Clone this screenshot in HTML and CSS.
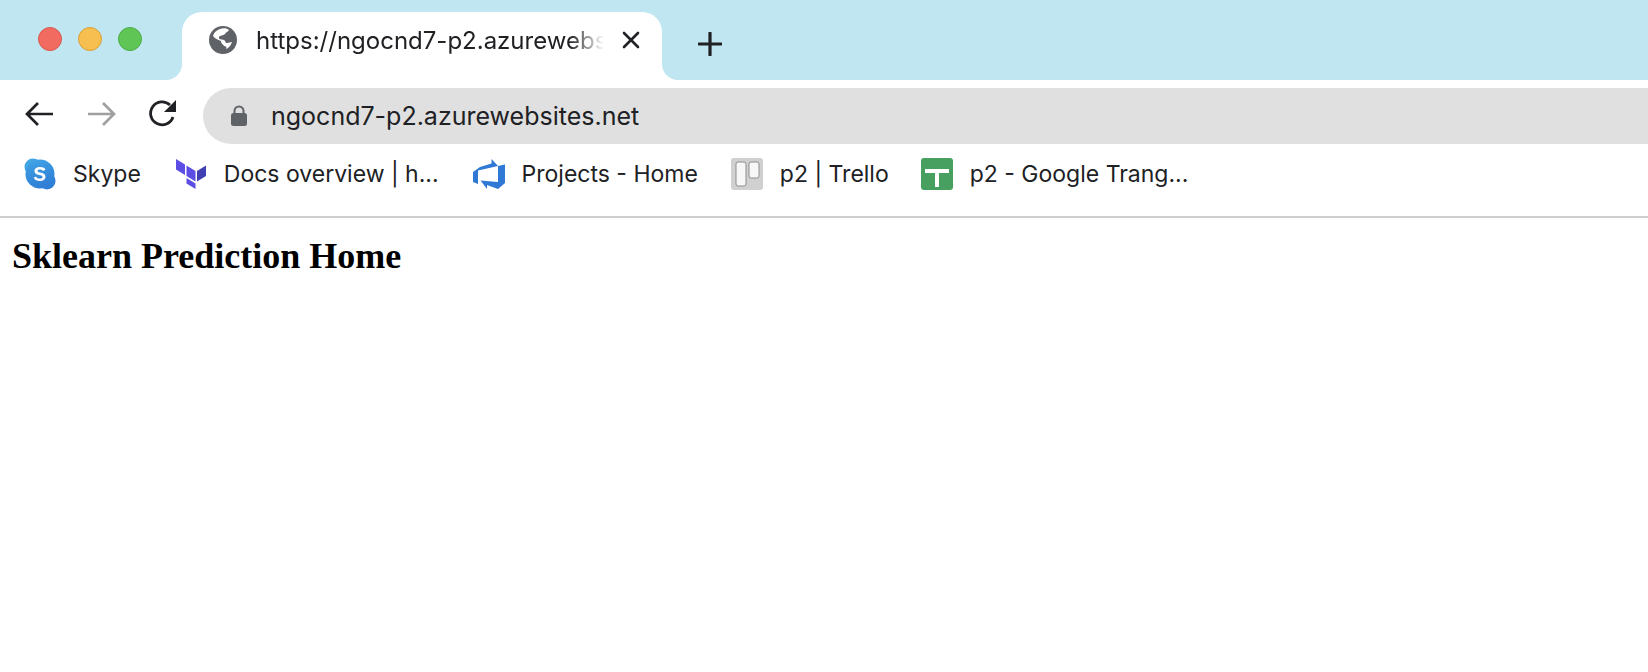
FILE: index.html
```html
<!DOCTYPE html>
<html lang="en">
<head>
<meta charset="utf-8">
<title>Sklearn Prediction Home</title>
<link rel="stylesheet" href="styles.css">
</head>
<body>
<header class="chrome">
  <div class="tabstrip">
    <div class="traffic">
      <span class="dot dot-red"></span>
      <span class="dot dot-yellow"></span>
      <span class="dot dot-green"></span>
    </div>
    <div class="tab">
      <span class="corner corner-left"></span>
      <svg class="globe" width="30" height="30" viewBox="0 0 30 30"><circle cx="15" cy="15" r="14" fill="#5f6368"/><path d="M12 4c3-1 7-1 9 1-1 2-3 2-4 4-2 2-5 1-6 3-1 3 3 2 5 3 2 1 1 3 3 3l5-1c-1 3-3 6-6 7 1-2 0-3-2-3-1-2-3-2-3-5-2-1-6-2-8-5 1-4 4-6 7-7z" fill="#fff"/></svg>
      <span class="tab-title">https://ngocnd7-p2.azurewebsites.net</span>
      <svg class="close" width="18" height="18" viewBox="0 0 18 18"><path d="M2 2l14 14M16 2L2 16" stroke="#202124" stroke-width="2.6" stroke-linecap="round"/></svg>
      <span class="corner corner-right"></span>
    </div>
    <svg class="newtab" width="24" height="24" viewBox="0 0 24 24"><path d="M12 1v22M1 12h22" stroke="#202124" stroke-width="3.2" stroke-linecap="round"/></svg>
  </div>
  <div class="toolbar">
    <svg class="nav nav-back" width="30" height="26" viewBox="0 0 30 26"><path d="M28 13H3M13 2L2 13l11 11" fill="none" stroke="#202124" stroke-width="2.7"/></svg>
    <svg class="nav nav-forward" width="30" height="26" viewBox="0 0 30 26"><path d="M2 13h25M17 2l11 11-11 11" fill="none" stroke="#a0a0a0" stroke-width="2.7"/></svg>
    <svg class="nav nav-reload" width="30" height="30" viewBox="0 0 30 30"><path d="M25 19A11.500 11.500 0 1 1 22 7" fill="none" stroke="#202124" stroke-width="2.8"/><path d="M28 2v12H16z" fill="#202124"/></svg>
    <div class="omnibox">
      <svg class="lock" width="18" height="22" viewBox="0 0 18 22"><path d="M4.500 9V6a4.500 4.500 0 0 1 9 0v3" fill="none" stroke="#5f6368" stroke-width="2"/><rect x="1" y="8" width="16" height="13" rx="2.500" fill="#5f6368"/></svg>
      <span class="url">ngocnd7-p2.azurewebsites.net</span>
    </div>
  </div>
  <nav class="bookmarks">
    <a class="bookmark bm-skype">
      <svg width="32" height="32" viewBox="0 0 32 32"><defs><linearGradient id="sk" x1="0" y1="0" x2="0.3" y2="1"><stop offset="0" stop-color="#42a5e6"/><stop offset="1" stop-color="#2f7fd6"/></linearGradient></defs><circle cx="9" cy="9" r="8.500" fill="#42a5e6"/><circle cx="23" cy="23" r="8.500" fill="#2f7fd6"/><circle cx="16" cy="16" r="14.500" fill="url(#sk)"/><path d="M21.500 11.500c-1-1.600-3-2.400-5.500-2.400-3.200 0-5.500 1.600-5.500 3.900 0 5 8 3.300 8 5.900 0 1-1 1.700-2.700 1.700-1.800 0-3-.7-3.800-2.200l-2.300 1.400c1.100 2.200 3.200 3.200 6.100 3.200 3.400 0 5.700-1.700 5.700-4.300 0-5.100-8-3.500-8-5.800 0-.9.900-1.500 2.400-1.500 1.500 0 2.500.5 3.200 1.600z" fill="#fff"/></svg>
      <span class="bm-label">Skype</span>
    </a>
    <a class="bookmark bm-tf">
      <svg width="32" height="32" viewBox="0 0 32 32"><path d="M1 1l9 5.500v10.500l-9-5.500z" fill="#5c4ee5"/><path d="M11.500 7.500l9 5.500v10.500l-9-5.500z" fill="#5c4ee5"/><path d="M22 13l9-5.500V18l-9 5.500z" fill="#4040b2"/><path d="M11.500 20l9 5.500V31l-9-5.500z" fill="#5c4ee5"/></svg>
      <span class="bm-label">Docs overview | h...</span>
    </a>
    <a class="bookmark bm-ado">
      <svg width="32" height="32" viewBox="0 0 32 32"><path d="M32 6.500V25l-7 6-11-4 0 4-6.500-8.500L25 24V8zM25 8L18.500 1v4.500L7 9 0 14v10l5 2V12.500z" fill="#2f78d6"/></svg>
      <span class="bm-label">Projects - Home</span>
    </a>
    <a class="bookmark bm-trello">
      <svg width="32" height="32" viewBox="0 0 32 32"><rect width="32" height="32" rx="3" fill="#d0d0d0"/><rect x="5" y="4" width="10" height="24" rx="2" fill="#f7f7f7" stroke="#8e8e8e"/><rect x="18" y="4" width="10" height="16" rx="2" fill="#f7f7f7" stroke="#8e8e8e"/></svg>
      <span class="bm-label">p2 | Trello</span>
    </a>
    <a class="bookmark bm-sheet">
      <svg width="32" height="32" viewBox="0 0 32 32"><rect width="32" height="32" rx="3" fill="#47a05f"/><path d="M4 11h24v4H18v14h-4V15H4z" fill="#fff"/></svg>
      <span class="bm-label">p2 - Google Trang...</span>
    </a>
  </nav>
</header>
<main class="page">
  <h1 class="heading">Sklearn Prediction Home</h1>
</main>
</body>
</html>
```
FILE: styles.css
```css
* { box-sizing: border-box; }
html, body { margin: 0; padding: 0; background: #fff; overflow: hidden; }
body { width: 1648px; height: 672px; font-family: "Inter", "Liberation Sans", sans-serif; color: #202124; }

.chrome { border-bottom: 2px solid #cfcfcf; height: 218px; }

.tabstrip { height: 80px; background: #bfe6f1; display: flex; align-items: flex-end; }
.traffic { width: 182px; height: 80px; padding: 27px 0 0 38px; display: flex; gap: 16px; align-items: flex-start; }
.dot { width: 24px; height: 24px; border-radius: 50%; border: 1px solid; }
.dot-red { background: #f16b60; border-color: #d9574d; }
.dot-yellow { background: #f6bf50; border-color: #dca03a; }
.dot-green { background: #5fc655; border-color: #4bab43; }

.tab { position: relative; width: 480px; height: 68px; background: #fff; border-radius: 20px 20px 0 0; display: flex; align-items: center; padding: 0 0 12px 26px; }
.corner { position: absolute; bottom: 0; width: 16px; height: 16px; background: #fff; }
.corner::after { content: ""; position: absolute; inset: 0; background: #bfe6f1; }
.corner-left { left: -16px; }
.corner-left::after { border-radius: 0 0 16px 0; }
.corner-right { right: -16px; }
.corner-right::after { border-radius: 0 0 0 16px; }
.globe { flex: none; }
.tab-title { width: 348px; margin-left: 18px; font-size: 24px; white-space: nowrap; overflow: hidden; -webkit-mask-image: linear-gradient(to right, #000 90%, transparent 100%); mask-image: linear-gradient(to right, #000 90%, transparent 100%); }
.close { flex: none; margin-left: 18px; }
.newtab { margin: 0 0 24px 36px; }

.toolbar { height: 64px; display: flex; align-items: flex-start; padding-left: 25px; }
.nav { flex: none; margin-top: 21px; }
.nav-forward { margin-left: 31px; }
.nav-reload { margin-left: 32px; margin-top: 18px; }
.omnibox { flex: 1; height: 56px; margin: 8px 0 0 25px; background: #e0e0e0; border-radius: 28px 0 0 28px; display: flex; align-items: center; padding-left: 27px; }
.lock { flex: none; }
.url { margin-left: 23px; font-size: 25px; white-space: nowrap; }

.bookmarks { height: 72px; display: flex; align-items: flex-start; padding: 14px 0 0 24px; }
.bookmark { display: flex; align-items: center; gap: 17px; font-size: 23px; white-space: nowrap; }
.bookmark svg { flex: none; }
.bm-tf { margin-left: 34px; }
.bm-ado { margin-left: 34px; }
.bm-trello { margin-left: 33px; }
.bm-sheet { margin-left: 32px; }

.page { padding: 0 12px; }
.heading { margin: 16px 0 0; font: bold 36px/44px "Liberation Serif", serif; color: #000; }
```
